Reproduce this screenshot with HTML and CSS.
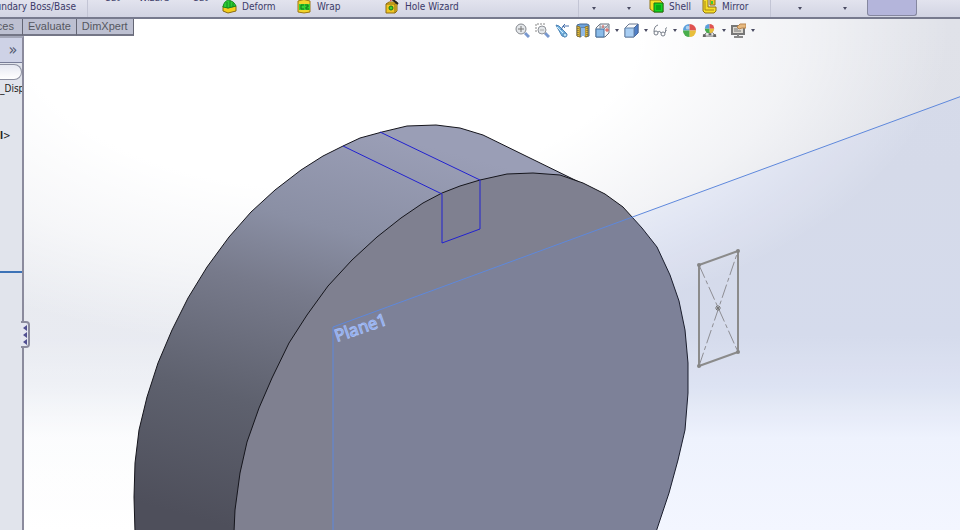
FILE: index.html
```
<!DOCTYPE html>
<html lang="en">
<head>
  <meta charset="UTF-8">
  <title>Part Modeler</title>
  <meta name="viewport" content="width=device-width, initial-scale=1.0">
  <link rel="stylesheet" href="styles.css">
</head>
<body>
  <header class="ribbon">
    <div class="group group-boss">
      <button class="tool">Boundary Boss/Base</button>
    </div>
    <div class="group group-features">
      <button class="tool tall">Cut</button>
      <button class="tool tall">Wizard</button>
      <button class="tool tall">Cut</button>
      <button class="tool">
        <svg class="tool-icon" viewBox="0 0 15 15"><path d="M1 7l5 2 8-2v5l-8 2-5-2z" fill="#f5cf1c" stroke="#8a6a10"/><path d="M1 8C2 2 6 0 9 2c3 1 4 3 5 5l-8 2z" fill="#2ccc35" stroke="#158a20"/><path d="M5 3v6M8 2v7M11 4v4" stroke="#158a20" fill="none"/></svg>
        Deform
      </button>
      <button class="tool">
        <svg class="tool-icon" viewBox="0 0 15 15"><path d="M1 2q6-3 12 0v11q-6 2-12 0z" fill="#f2d52a" stroke="#9b7712"/><path d="M2 5h11v6H2z" fill="#35d432"/><path d="M7 6H4v4h3M8 6h3v2H9v2h3" fill="none" stroke="#11721c"/></svg>
        Wrap
      </button>
      <button class="tool">
        <svg class="tool-icon" viewBox="0 0 15 15"><path d="M1 5l3-2h8v9l-2 2H1z" fill="#f0c622" stroke="#8f6c15"/><path d="M1 5h9v9M10 5l2-2" fill="none" stroke="#8f6c15"/><circle cx="6" cy="9" r="2" fill="#42d332" stroke="#15751d"/><path d="M7 0l6 5" stroke="#222" stroke-width="2"/><path d="M5 2l3-2" stroke="#d33"/></svg>
        Hole Wizard
      </button>
    </div>
    <div class="group group-pattern">
      <button class="tool drop" aria-label="Pattern options"><span class="arrow"></span></button>
      <button class="tool drop" aria-label="Rib options"><span class="arrow"></span></button>
      <button class="tool">
        <svg class="tool-icon" viewBox="0 0 15 15"><path d="M1 1h10l3 3v9H5l-4-3z" fill="#f4df25" stroke="#8e7212"/><path d="M5 4h9v9H5z" fill="#14d51d" stroke="#16731b"/><path d="M7 6h5v5H7z" fill="#0aa817"/></svg>
        Shell
      </button>
      <button class="tool">
        <svg class="tool-icon" viewBox="0 0 15 15"><path d="M1 1l2-1h3v8h8v4l-2 2H3l-2-2z" fill="#f6df28" stroke="#8e7212"/><path d="M8 0h5v6H8z" fill="#f2c622" stroke="#8e7212"/><path d="M3 2v9h9" fill="none" stroke="#a98413"/><path d="M9 2h2v3H9z" fill="#3bcc35"/></svg>
        Mirror
      </button>
    </div>
    <div class="group group-curves">
      <button class="tool drop" aria-label="Reference geometry"><span class="arrow"></span></button>
      <button class="tool drop" aria-label="Curves"><span class="arrow"></span></button>
      <button class="tool pressed" aria-label="Instant3D" aria-pressed="true"></button>
    </div>
  </header>

  <main class="workspace">
    <svg class="scene" viewBox="0 19 960 511" preserveAspectRatio="xMinYMin slice">
      <defs>
        <linearGradient id="haze" x1="0" y1="0" x2="0" y2="1">
          <stop offset="0" stop-color="#e0e2e9"/>
          <stop offset=".3" stop-color="#dfe1e8"/>
          <stop offset=".62" stop-color="#dfe2eb"/>
          <stop offset=".72" stop-color="#e8ebf2"/>
          <stop offset=".82" stop-color="#fafbfd"/>
          <stop offset="1" stop-color="#fff"/>
        </linearGradient>
        <radialGradient id="glow" gradientUnits="userSpaceOnUse" cx="0" cy="0" r="1" gradientTransform="translate(330 30) scale(620 320)">
          <stop offset=".5" stop-color="#fff"/>
          <stop offset=".75" stop-color="#fff" stop-opacity=".6"/>
          <stop offset="1" stop-color="#fff" stop-opacity="0"/>
        </radialGradient>
        <linearGradient id="fade">
          <stop offset="0" stop-color="#fff" stop-opacity=".3"/>
          <stop offset=".4" stop-color="#fff" stop-opacity=".3"/>
          <stop offset=".7" stop-color="#fff" stop-opacity="0"/>
        </linearGradient>
        <linearGradient id="rim" gradientUnits="userSpaceOnUse" x1="350" y1="125" x2="240" y2="530">
          <stop offset="0" stop-color="#9a9eb6"/>
          <stop offset=".25" stop-color="#8a8fa4"/>
          <stop offset=".42" stop-color="#777a8b"/>
          <stop offset=".7" stop-color="#5e616e"/>
          <stop offset="1" stop-color="#4e4f5b"/>
        </linearGradient>
      </defs>
      <rect y="18" width="960" height="512" fill="url(#haze)"/>
      <rect y="18" width="960" height="512" fill="url(#fade)"/>
      <rect y="18" width="960" height="512" fill="url(#glow)"/>

      <!-- disc: rim, then front face -->
      <path class="edge" fill="url(#rim)" d="M135 532L134 497 135 463 139 430 147 397 158 363 172 330 188 298 207 267 229 237 251 212 275 190 301 170 323 156 343 146 360 138 382 132 407 126 436 125 460 128 483 135 579 182 500 532z"/>
      <path class="edge" fill="#7f8090" d="M234 532L235 510 240 473 247 442 259 408 272 378 289 343 307 315 328 286 352 260 377 237 401 218 423 203 442 193 460 186 480 180 507 174 533 173 560 175 583 183 605 194 623 207 642 228 657 247 670 275 679 301 685 330 688 363 688 393 685 430 678 460 669 493 656 532z"/>

      <!-- reference plane -->
      <path class="plane" d="M333 532V327L962 96V532z"/>
      <text class="plane-name" transform="translate(337 342) rotate(-19)">Plane1</text>

      <path class="sketch" d="M343 146L442 194V243L480 229V180L380 132"/>

      <!-- center rectangle sketch -->
      <path class="rect-edge" d="M699 265L738 251V352L699 366z"/>
      <path class="rect-diagonal" d="M699 265L738 352M699 366L738 251"/>
      <path class="rect-center" d="M715 308h6M718 305v6M716 306l4 4M720 306l-4 4"/>
      <g fill="#858585">
        <circle cx="699" cy="265" r="2"/>
        <circle cx="738" cy="251" r="2"/>
        <circle cx="738" cy="352" r="2"/>
        <circle cx="699" cy="366" r="2"/>
      </g>
    </svg>

    <nav class="tabs">
      <button class="tab tab-cut">Surfaces</button>
      <button class="tab">Evaluate</button>
      <button class="tab">DimXpert</button>
    </nav>

    <div class="view-tools">
      <button class="view" aria-label="Zoom to fit">
        <svg viewBox="0 0 15 15"><path d="M10 10l4 4" stroke="#7898cf" stroke-width="3"/><circle cx="6" cy="6" r="5" fill="#e4e7ea" stroke="#85898f"/><path d="M6 3v6M3 6h6" stroke="#777"/></svg>
      </button>
      <button class="view" aria-label="Zoom to area">
        <svg viewBox="0 0 15 15"><path d="M1 9V1h9" fill="none" stroke="#888" stroke-dasharray="2 1"/><path d="M10 10l4 4" stroke="#7898cf" stroke-width="3"/><circle cx="7" cy="7" r="4" fill="#e4e7ea" stroke="#90949a"/><path d="M5 7h4" stroke="#aaa"/></svg>
      </button>
      <button class="view" aria-label="Previous view">
        <svg viewBox="0 0 15 15"><path d="M1 2l3 1 8 8-2 3-3-1-5-9z" fill="#75b5e3" stroke="#4d83b5"/><path d="M2 4l7 7" stroke="#d7effb"/><circle cx="10" cy="12" r="2" fill="#b7e2f6" stroke="#4d83b5"/><path d="M14 3H8M10 1L8 3l2 2M8 3L6 7" fill="none" stroke="#4970aa"/></svg>
      </button>
      <button class="view" aria-label="Section view">
        <svg viewBox="0 0 15 15"><path d="M2 2l3-1h7l2 1v11l-3 1V5H6v9l-4-1z" fill="#6fa4dd" stroke="#456894"/><path d="M2 3l3 1v10l-3-1zM10 4l3-1v10l-3 1z" fill="#e5c03b" stroke="#8d7532"/><path d="M6 5h4v8H6z" fill="#8fb9e6"/><path d="M3 5v7M12 5v7" stroke="#5c5134" stroke-dasharray="1 1"/></svg>
      </button>
      <button class="view" aria-label="View orientation">
        <svg viewBox="0 0 15 15"><path d="M1 5l4-4h9v9l-4 4H1z" fill="#f3f5f8" stroke="#68727f"/><path d="M1 6h8v8H1z" fill="#8bbce9" stroke="#48719e"/><path d="M9 6l5-5M5 1v5M5 4h9" fill="none" stroke="#8a929d"/><path d="M8 2v3M12 5v4M10 7h4" stroke="#d5504a"/></svg>
        <span class="arrow"></span>
      </button>
      <button class="view" aria-label="Display style">
        <svg viewBox="0 0 15 15"><path d="M1 5l4-4h9v9l-4 4H1z" fill="#f8fafc" stroke="#6b7890"/><path d="M10 5l4-4v9l-4 4z" fill="#4f7fc8" stroke="#49699d"/><path d="M1 5h9v9H1z" fill="#a9cef3" stroke="#6583a9"/></svg>
        <span class="arrow"></span>
      </button>
      <button class="view" aria-label="Hide or show items">
        <svg viewBox="0 0 15 15" fill="none" stroke="#757c87"><path d="M5 2Q1 3 1 9"/><circle cx="3" cy="10" r="2"/><path d="M5 9q2-2 3 1M14 5q-2-1-1 3"/><circle cx="10" cy="11" r="2"/><path d="M12 10l1-3"/></svg>
        <span class="arrow"></span>
      </button>
      <button class="view" aria-label="Edit appearance">
        <svg viewBox="0 0 16 16"><path d="M8 8V1a7 7 0 0 0-7 7z" fill="#5aa0dd"/><path d="M8 8h7a7 7 0 0 0-7-7z" fill="#e05250"/><path d="M8 8v7a7 7 0 0 0 7-7z" fill="#e8bf3b"/><path d="M8 8H1a7 7 0 0 0 7 7z" fill="#48ae4b"/><circle cx="6" cy="5" r="2" fill="#fff" opacity=".5"/></svg>
      </button>
      <button class="view" aria-label="Apply scene">
        <svg viewBox="0 0 16 16"><path d="M1 14l4-4h6l4 4z" fill="#e8e8e8" stroke="#777"/><path d="M8 6V1a5 5 0 0 0-5 5z" fill="#5aa0dd"/><path d="M8 6h5a5 5 0 0 0-5-5z" fill="#e05250"/><path d="M8 6v5a5 5 0 0 0 5-5z" fill="#e8bf3b"/><path d="M8 6H3a5 5 0 0 0 5 5z" fill="#48ae4b"/><path d="M1 12h3v3H1zM7 11h3v2H7zM12 12h3v3h-3z" fill="#666"/></svg>
        <span class="arrow"></span>
      </button>
      <button class="view" aria-label="View settings">
        <svg viewBox="0 0 15 15"><path d="M1 3h12v8H1z" fill="#dcd9d2" stroke="#777" stroke-width="2"/><path d="M3 8h7M3 6h4" stroke="#777"/><path d="M7 11v2M3 14h9" stroke="#888" stroke-width="2"/><path d="M6 4l3-3h6v4h-4L8 6z" fill="#e6b980" stroke="#b9854e"/></svg>
        <span class="arrow"></span>
      </button>
    </div>

    <aside class="tree-panel">
      <button class="expand" aria-label="More tabs">»</button>
      <input class="filter" type="text" aria-label="Filter">
      <p class="tree-item">_Disp</p>
      <p class="tree-item tree-item-mark"><b>l</b>&gt;</p>
      <hr class="rollback">
      <button class="splitter" aria-label="Collapse panel">
        <svg viewBox="0 0 7 23"><path d="M6 2L2 5l4 3zM6 9l-4 3 4 3zM6 16l-4 3 4 3z" fill="#514f91"/></svg>
      </button>
    </aside>
  </main>
</body>
</html>
```
FILE: styles.css
```
* {
  box-sizing: border-box;
}
body {
  margin: 0;
  height: 100vh;
  display: flex;
  flex-direction: column;
  overflow: hidden;
  font-family: "DejaVu Sans Condensed", Tahoma, "Noto Sans", sans-serif;
  font-size: 10px;
  background-color: #fff;
}
button {
  margin: 0;
  padding: 0;
  border: none;
  background: none;
  font: inherit;
  color: inherit;
}
svg {
  display: block;
}

/* ribbon */
.ribbon {
  flex: none;
  height: 19px;
  display: grid;
  grid-template-columns: 88px 491px 192px 1fr;
  overflow: hidden;
  color: #3b3a68;
  background: linear-gradient(#e2e3ee, #d2d4e3);
  border-bottom: 2px solid #777a8e;
}
.group {
  display: grid;
  height: 17px;
  padding-left: 6px;
  border-right: 1px solid #c3c5d5;
}
.group-boss {
  display: flex;
  justify-content: flex-end;
  padding-right: 11px;
}
.group-features {
  grid-template-columns: 36px 48px 44px 75px 88px 1fr;
}
.group-pattern {
  grid-template-columns: 30px 40px 53px 1fr;
  padding-left: 0;
}
.group-curves {
  grid-template-columns: 45px 45px 50px;
  border-right: none;
}
.tool {
  display: flex;
  align-items: center;
  gap: 5px;
  height: 13px;
  line-height: 13px;
  white-space: nowrap;
}
.tool-icon {
  flex: none;
  width: 15px;
  height: 15px;
}
.tall {
  height: 3px;
  align-items: flex-end;
  justify-content: center;
  line-height: 10px;
}
.drop {
  height: 17px;
  justify-content: center;
}
.pressed {
  height: 16px;
  background-color: #b4b5db;
  border: 1px solid #85879f;
  border-top: none;
  border-radius: 0 0 3px 3px;
}
.arrow {
  border: 2px solid transparent;
  border-top: 3px solid #4a4b62;
  border-bottom: none;
}

/* workspace */
.workspace {
  flex: 1;
  min-height: 0;
  display: grid;
  grid-template-columns: 24px 1fr;
  grid-template-rows: 17px 1fr;
}
.scene {
  grid-area: 1 / 1 / 3 / 3;
  width: 100%;
  height: 100%;
  min-height: 0;
}
.edge {
  stroke: #15151c;
  stroke-linejoin: round;
}
.plane {
  fill: #6387ff;
  fill-opacity: .08;
  stroke: #5e88dc;
}
.plane-name {
  font-family: "Noto Sans", sans-serif;
  font-size: 17px;
  fill: #6f92e4;
  stroke: #a3bbf2;
}
.sketch {
  fill: none;
  stroke: #2222d0;
}
.rect-edge {
  fill: none;
  stroke: #8b8b8b;
  stroke-width: 2;
}
.rect-diagonal {
  stroke: #8d8d93;
  stroke-dasharray: 14 3 4 3;
}
.rect-center {
  stroke: #777;
}

/* tabs */
.tabs {
  grid-area: 1 / 1 / 2 / 3;
  justify-self: start;
  display: flex;
  font-family: "Liberation Sans", Arial, sans-serif;
  font-size: 11px;
  line-height: 15px;
  color: #55575f;
}
.tab {
  padding: 0 5px;
  background-color: #bdc0d1;
  border-right: 1px solid #646674;
  border-bottom: 2px solid #747686;
}
.tab-cut {
  width: 23px;
  padding: 0 8px 0 0;
  display: flex;
  justify-content: flex-end;
  overflow: hidden;
}

/* view toolbar */
.view-tools {
  grid-area: 1 / 2 / 3 / 3;
  align-self: start;
  display: flex;
  justify-content: flex-end;
  gap: 5px;
  padding: 4px 205px 0 0;
}
.view {
  display: flex;
  align-items: center;
  gap: 5px;
}
.view svg {
  width: 15px;
  height: 15px;
}

/* feature tree panel */
.tree-panel {
  grid-area: 2 / 1 / 3 / 2;
  position: relative;
  display: flex;
  flex-direction: column;
  min-width: 0;
  color: #222;
  background-color: #e1e4ec;
  border-top: 2px solid #a4a7b8;
  border-right: 2px solid #8b8b9d;
}
.expand {
  height: 25px;
  padding-left: 4px;
  font-size: 16px;
  line-height: 24px;
  color: #555a70;
  background-color: #ced2e6;
  border-bottom: 1px solid #777c98;
}
.filter {
  width: 100%;
  height: 16px;
  margin: 1px 0;
  border: 1px solid #8d90a1;
  border-left: none;
  border-radius: 0 8px 8px 0;
  background: linear-gradient(#e6e8f2, #fff);
}
.tree-item {
  margin: 0;
  height: 16px;
  overflow: hidden;
  line-height: 16px;
}
.tree-item-mark {
  margin-top: 31px;
}
.rollback {
  width: 100%;
  height: 2px;
  margin: 127px 0 0;
  border: none;
  background-color: #3c72b6;
}
.splitter {
  position: absolute;
  top: 283px;
  right: -8px;
  width: 9px;
  height: 27px;
  background-color: #e4e6f0;
  border: 2px solid #8b8b9d;
  border-left: none;
  border-radius: 0 4px 4px 0;
}
.splitter svg {
  width: 7px;
  height: 23px;
}
```
